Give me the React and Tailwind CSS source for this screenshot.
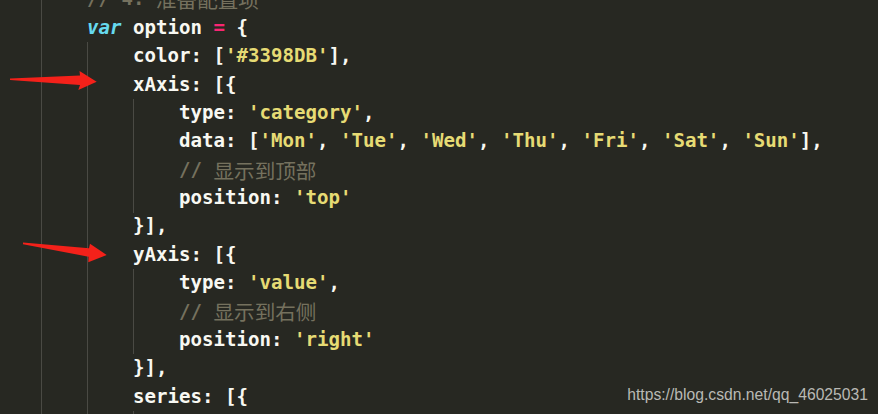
import React from 'react';

// token kinds -> colour classes
const tone = {
  p: 'text-[#f8f8f2]',
  s: 'text-[#e6db74]',
  c: 'text-[#75715e]',
  k: 'text-[#66d9ef] italic',
  o: 'text-[#f92672]',
};

const lines = [
  { indent: 2, tokens: [['c', '// 4. '], ['cj', '准备配置项']] },
  { indent: 2, tokens: [['k', 'var'], ['p', ' option '], ['o', '='], ['p', ' {']] },
  { indent: 3, tokens: [['p', 'color: ['], ['s', "'#3398DB'"], ['p', '],']] },
  { indent: 3, tokens: [['p', 'xAxis: [{']] },
  { indent: 4, tokens: [['p', 'type: '], ['s', "'category'"], ['p', ',']] },
  {
    indent: 4,
    tokens: [
      ['p', 'data: ['],
      ['s', "'Mon'"], ['p', ', '],
      ['s', "'Tue'"], ['p', ', '],
      ['s', "'Wed'"], ['p', ', '],
      ['s', "'Thu'"], ['p', ', '],
      ['s', "'Fri'"], ['p', ', '],
      ['s', "'Sat'"], ['p', ', '],
      ['s', "'Sun'"], ['p', '],'],
    ],
  },
  { indent: 4, tokens: [['c', '// '], ['cj', '显示到顶部']] },
  { indent: 4, tokens: [['p', 'position: '], ['s', "'top'"]] },
  { indent: 3, tokens: [['p', '}],']] },
  { indent: 3, tokens: [['p', 'yAxis: [{']] },
  { indent: 4, tokens: [['p', 'type: '], ['s', "'value'"], ['p', ',']] },
  { indent: 4, tokens: [['c', '// '], ['cj', '显示到右侧']] },
  { indent: 4, tokens: [['p', 'position: '], ['s', "'right'"]] },
  { indent: 3, tokens: [['p', '}],']] },
  { indent: 3, tokens: [['p', 'series: [{']] },
  { indent: 4, tokens: [] },
];

const Token = ({ kind, text }) => {
  if (kind === 'cj') {
    return (
      <span className="text-[#75715e] text-[20.6px] font-normal font-['Noto_Sans_CJK_SC',sans-serif]">
        {text}
      </span>
    );
  }
  return <span className={tone[kind]}>{text}</span>;
};

const Line = ({ indent, tokens }) => (
  <div className="flex h-[28.38px] items-center whitespace-pre">
    {Array.from({ length: indent }).map((_, i) => (
      <span key={i} className="h-full w-[46px] shrink-0 border-l border-[#4a4a44]" />
    ))}
    {tokens.map(([kind, text], i) => (
      <Token key={i} kind={kind} text={text} />
    ))}
  </div>
);

const Arrows = () => (
  <svg className="absolute left-0 top-0" width="120" height="280" viewBox="0 0 120 280">
    <polygon
      points="10,78.5 80,75.5 79.5,71 96.7,81.7 78.3,90 80,85 10,80"
      fill="#f4211a"
    />
    <polygon
      points="23,242.6 89,248.3 90,243.8 106.7,255 88.3,262.3 88.5,256.7 23,244.2"
      fill="#f4211a"
    />
  </svg>
);

export default function App() {
  return (
    <div className="relative h-[414px] w-full overflow-hidden bg-[#272822]">
      <div className="-ml-[5px] -mt-[14.5px] font-['DejaVu_Sans_Mono',monospace] text-[19.1px] font-semibold">
        {lines.map((line, i) => (
          <Line key={i} indent={line.indent} tokens={line.tokens} />
        ))}
      </div>
      <Arrows />
      <div className="absolute right-[10px] top-[385px] font-['Liberation_Sans',Arial,sans-serif] text-[15.7px] leading-[20px] text-[#b9b9b4]">
        https://blog.csdn.net/qq_46025031
      </div>
    </div>
  );
}
